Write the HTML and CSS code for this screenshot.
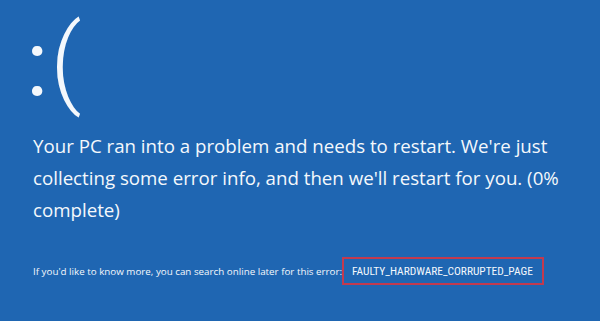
FILE: index.html
```html
<!DOCTYPE html>
<html>
<head>
<meta charset="utf-8">
<link rel="stylesheet" href="styles.css">
</head>
<body>
<div class="screen">
  <div class="face"><span class="colon">:</span><span class="paren">(</span></div>
  <p class="message">Your PC ran into a problem and needs to restart. We're just collecting some error info, and then we'll restart for you. (0% complete)</p>
  <div class="info">
    <span class="hint">If you'd like to know more, you can search online later for this error:</span>
    <span class="code">FAULTY_HARDWARE_CORRUPTED_PAGE</span>
  </div>
</div>
</body>
</html>
```
FILE: styles.css
```css
html, body {
  margin: 0;
  padding: 0;
  background: #1f66b2;
}
.screen {
  width: 600px;
  height: 321px;
  box-sizing: border-box;
  padding: 8px 28px 0 30px;
  color: #f4f8fc;
  font-family: "Open Sans", "Noto Sans", sans-serif;
  overflow: hidden;
}
.face {
  font-family: "Roboto", sans-serif;
  line-height: 108px;
  height: 112px;
  margin-left: -4px;
  white-space: nowrap;
}
.colon {
  font-size: 92px;
  font-weight: 400;
}
.paren {
  font-size: 98px;
  font-weight: 300;
  margin-left: 2px;
}
.message {
  margin: 10px 0 0 3px;
  font-size: 18.7px;
  line-height: 32px;
  font-weight: 400;
}
.info {
  margin: 31px 0 0 3px;
  display: flex;
  align-items: center;
  white-space: nowrap;
}
.hint {
  font-size: 9.8px;
}
.code {
  border: 2px solid #c23a4f;
  padding: 5px 9px 5px 8px;
  font-family: "Roboto Condensed", "Liberation Sans", sans-serif;
  font-size: 11.4px;
}
```
